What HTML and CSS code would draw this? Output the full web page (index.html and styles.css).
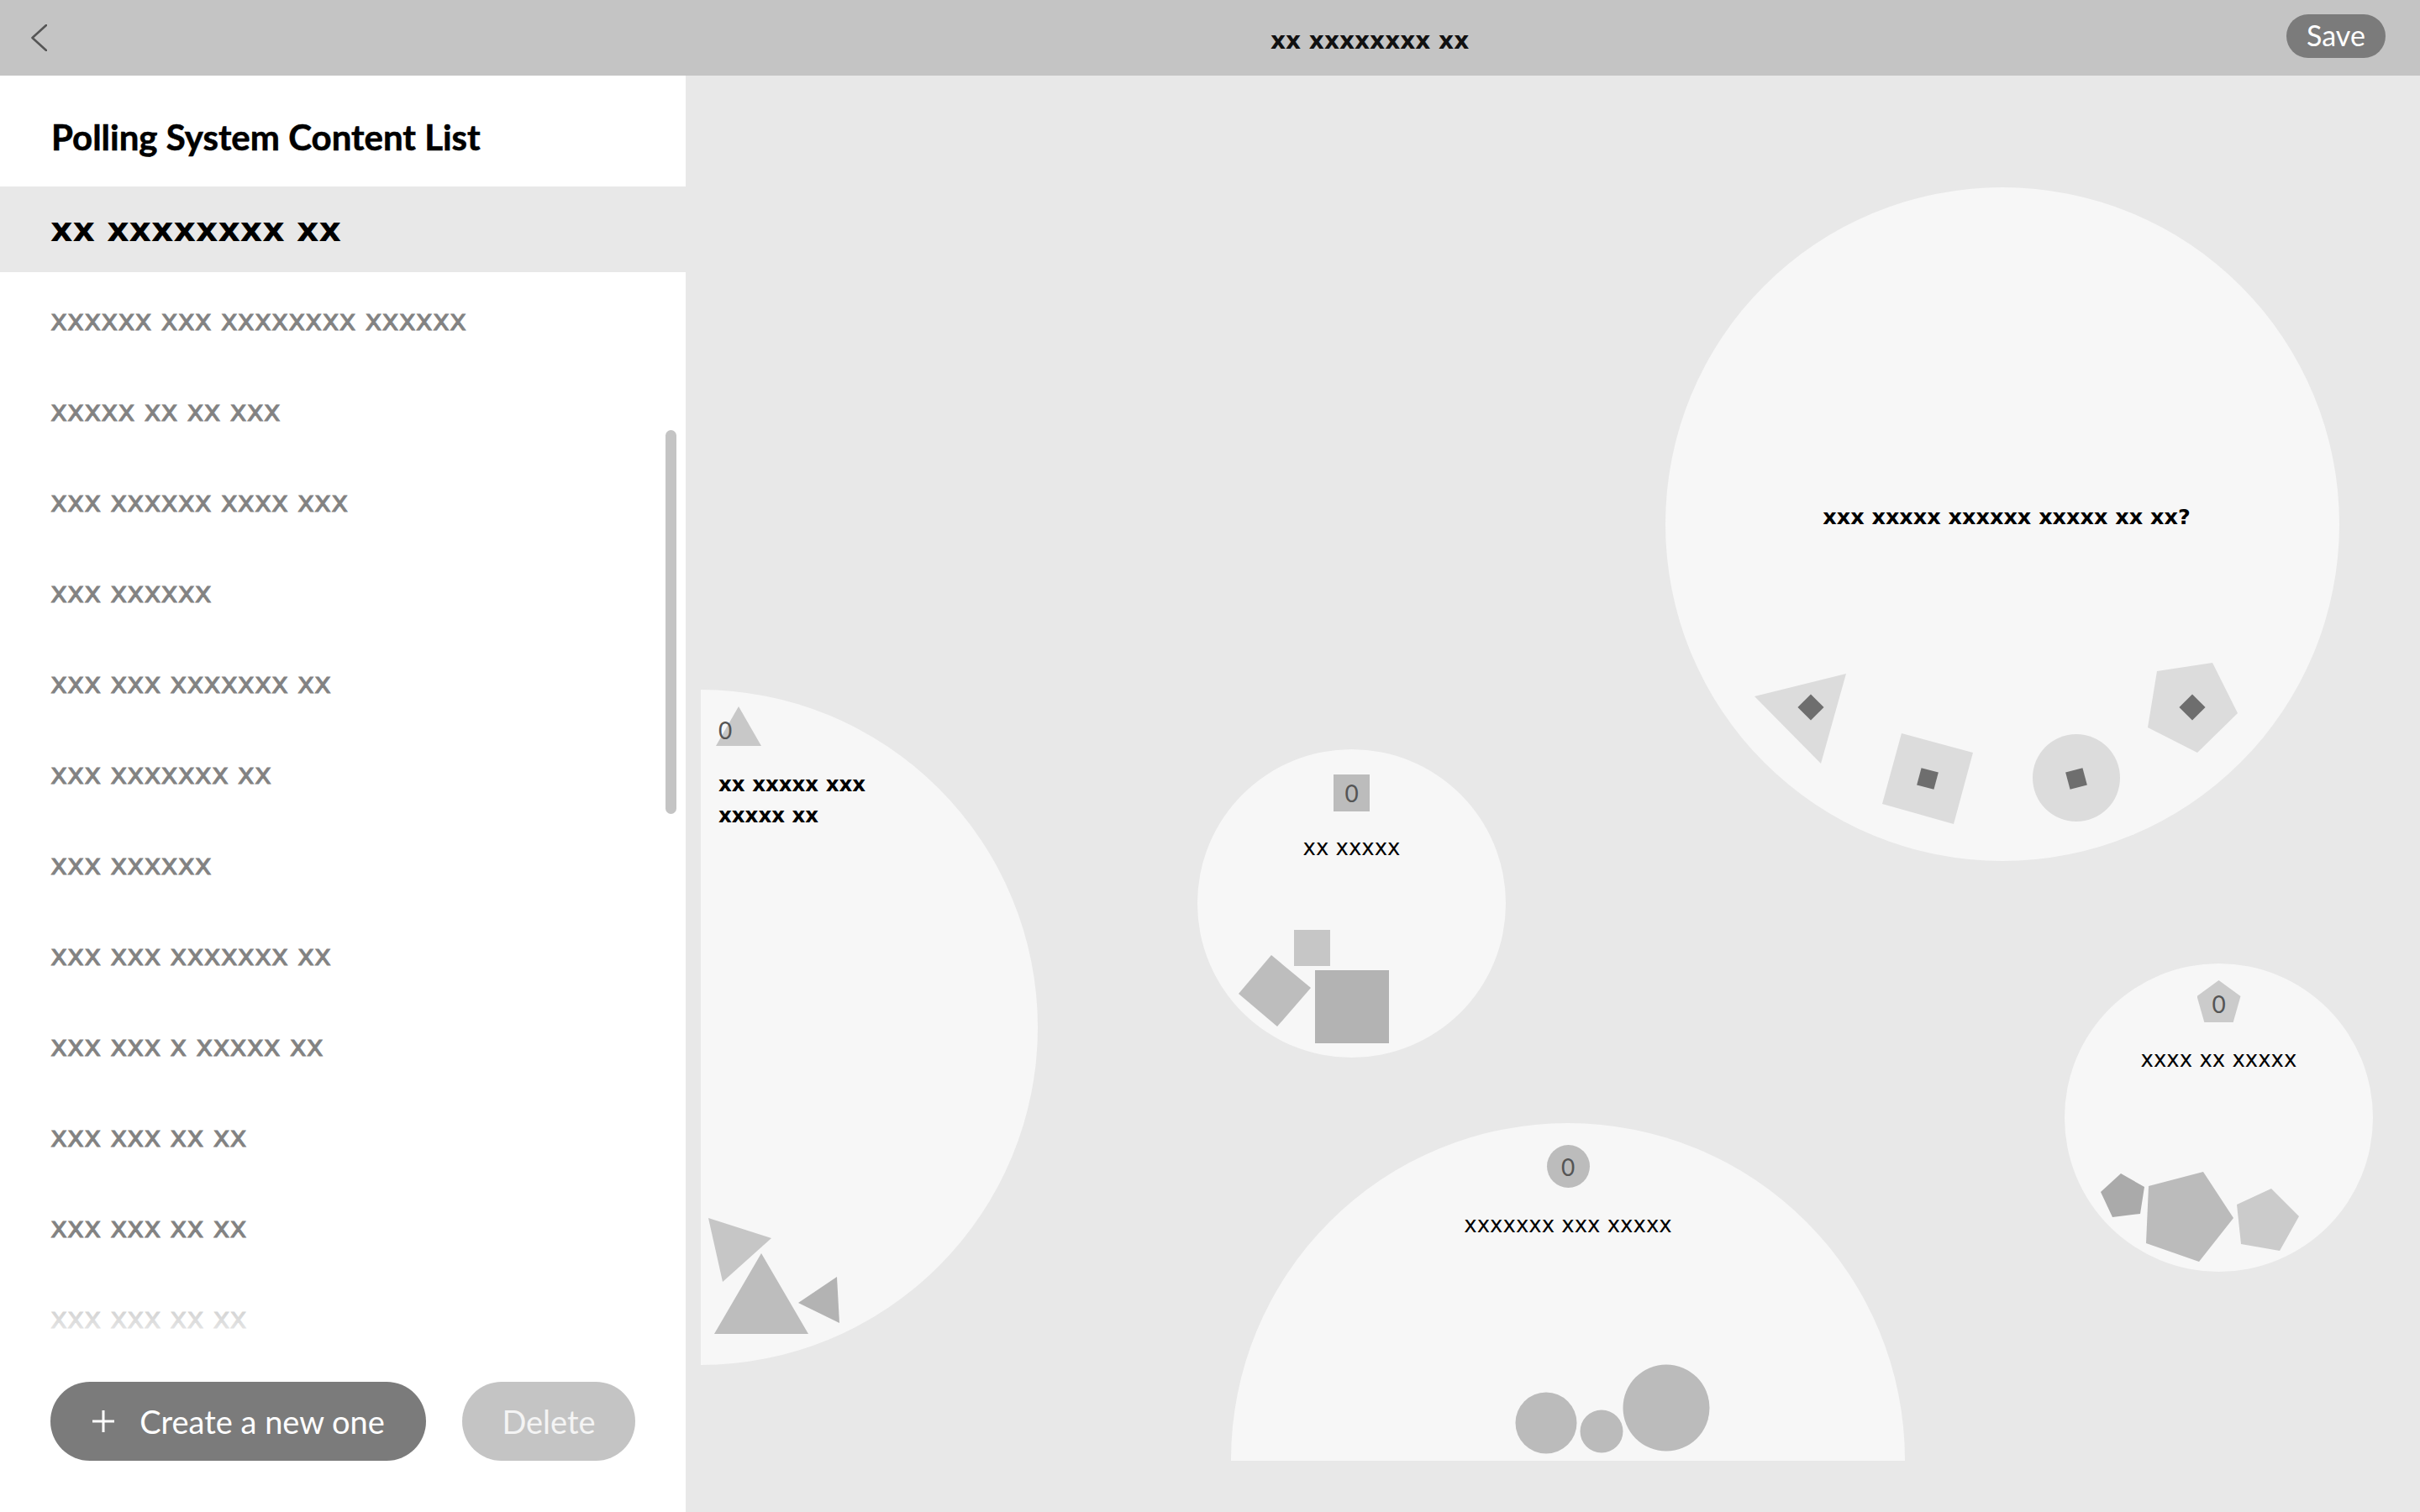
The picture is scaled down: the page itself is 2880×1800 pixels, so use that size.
FILE: index.html
```html
<!DOCTYPE html>
<html lang="en">
<head>
<meta charset="utf-8">
<title>Polling System Content List</title>
<link rel="stylesheet" href="styles.css">
</head>
<body>
<header class="topbar">
  <button class="back" aria-label="Back">
    <svg viewBox="0 0 19 32" width="19" height="32"><polyline points="18,1 1.5,16 18,31" fill="none" stroke="#555" stroke-width="2.6" stroke-linecap="round" stroke-linejoin="round"/></svg>
  </button>
  <h1 class="page-title">xx xxxxxxxx xx</h1>
  <button class="save">Save</button>
</header>
<div class="main">
  <aside class="sidebar">
    <h2 class="side-head">Polling System Content List</h2>
    <div class="list-wrap">
      <ul class="list">
        <li class="item selected">xx xxxxxxxx xx</li>
        <li class="item">xxxxxx xxx xxxxxxxx xxxxxx</li>
        <li class="item">xxxxx xx xx xxx</li>
        <li class="item">xxx xxxxxx xxxx xxx</li>
        <li class="item">xxx xxxxxx</li>
        <li class="item">xxx xxx xxxxxxx xx</li>
        <li class="item">xxx xxxxxxx xx</li>
        <li class="item">xxx xxxxxx</li>
        <li class="item">xxx xxx xxxxxxx xx</li>
        <li class="item">xxx xxx x xxxxx xx</li>
        <li class="item">xxx xxx xx xx</li>
        <li class="item">xxx xxx xx xx</li>
        <li class="item">xxx xxx xx xx</li>
      </ul>
      <div class="scrollbar"></div>
      <div class="fade"></div>
    </div>
    <div class="actions">
      <button class="btn btn-create">
        <svg viewBox="0 0 28 28" width="28" height="28"><path d="M14 1v26M1 14h26" stroke="#fff" stroke-width="3" fill="none"/></svg>
        <span>Create a new one</span>
      </button>
      <button class="btn btn-delete">Delete</button>
    </div>
  </aside>
  <main class="canvas">
    <div class="stage">
      <div class="bubble b1">
        <svg class="shapes" viewBox="0 0 802 802">
          <polygon points="106,606 215,579 185,686" fill="#dcdcdc"/>
          <rect x="-11" y="-11" width="22" height="22" fill="#6e6e6e" transform="translate(173 619) rotate(45)"/>
          <polygon points="281,650 366,673 343,758 258,734" fill="#dcdcdc"/>
          <rect x="-10.5" y="-10.5" width="21" height="21" fill="#6e6e6e" transform="translate(312 704) rotate(15)"/>
          <circle cx="489" cy="703" r="52" fill="#dcdcdc"/>
          <rect x="-10.5" y="-10.5" width="21" height="21" fill="#6e6e6e" transform="translate(489 704) rotate(-15)"/>
          <polygon points="585,576 651,566 681,626 633,673 574,643" fill="#dcdcdc"/>
          <rect x="-11" y="-11" width="22" height="22" fill="#6e6e6e" transform="translate(627 619) rotate(45)"/>
        </svg>
        <p class="label label-bold">xxx xxxxx xxxxxx xxxxx xx xx?</p>
      </div>

      <div class="bubble b2">
        <svg class="shapes" viewBox="0 0 804 804">
          <polygon points="412,629 487,653 429,705" fill="#c6c6c6"/>
          <polygon points="475,671 531,767 419,767" fill="#bdbdbd"/>
          <polygon points="565,699 568,754 519,730" fill="#b3b3b3"/>
        </svg>
        <div class="badge badge-tri">0</div>
        <p class="label label-wrap">xx xxxxx xxx xxxxx xx</p>
      </div>

      <div class="bubble b3">
        <svg class="shapes" viewBox="0 0 367 367">
          <rect x="115" y="215" width="43" height="43" fill="#c6c6c6"/>
          <rect x="140" y="263" width="88" height="87" fill="#b3b3b3"/>
          <polygon points="88,245 135,284 95,330 49,291" fill="#bdbdbd"/>
        </svg>
        <div class="badge badge-square">0</div>
        <p class="label">xx xxxxx</p>
      </div>

      <div class="bubble b4">
        <svg class="shapes" viewBox="0 0 802 802">
          <circle cx="375" cy="357" r="36.5" fill="#bbbbbb"/>
          <circle cx="441" cy="367" r="25.5" fill="#bbbbbb"/>
          <circle cx="518" cy="339" r="51.5" fill="#bbbbbb"/>
        </svg>
        <div class="badge badge-circle">0</div>
        <p class="label">xxxxxxx xxx xxxxx</p>
      </div>

      <div class="bubble b5">
        <svg class="shapes" viewBox="0 0 367 367">
          <polygon points="67,250 95,266 90,298 57,302 43,272" fill="#aaaaaa"/>
          <polygon points="165,248 201,303 160,355 97,333 100,265" fill="#bbbbbb"/>
          <polygon points="246,268 279,301 256,342 210,334 205,287" fill="#cbcbcb"/>
        </svg>
        <div class="badge badge-pent">0</div>
        <p class="label">xxxx xx xxxxx</p>
      </div>
    </div>
  </main>
</div>
</body>
</html>
```
FILE: styles.css
```css
* { box-sizing: border-box; }

html, body {
  margin: 0;
  width: 2880px;
  height: 1800px;
  overflow: hidden;
}

body {
  display: flex;
  flex-direction: column;
  background: #e8e8e8;
  font-family: Lato, "Noto Sans", sans-serif;
}

button { font-family: inherit; cursor: pointer; }

/* ---------- top bar ---------- */
.topbar {
  flex: none;
  height: 90px;
  background: #c4c4c4;
  display: flex;
  align-items: center;
  padding: 0 41px 0 37px;
}

.back {
  width: 19px;
  height: 32px;
  padding: 0;
  border: 0;
  background: none;
  display: flex;
}

.page-title {
  margin: 7px 0 0 1456px;
  font: 700 28px "DejaVu Sans", sans-serif;
  color: #111;
}

.save {
  margin: -4px 0 0 auto;
  width: 118px;
  height: 52px;
  padding: 0 0 3px;
  border: 0;
  border-radius: 26px;
  background: #7b7b7b;
  color: #fff;
  font-size: 34px;
  font-weight: 400;
}

/* ---------- layout ---------- */
.main {
  flex: 1;
  display: flex;
  min-height: 0;
}

.sidebar {
  flex: none;
  width: 816px;
  background: #fff;
  display: flex;
  flex-direction: column;
}

.side-head {
  margin: 0;
  height: 132px;
  padding: 15px 0 0 61px;
  line-height: 117px;
  font-size: 42px;
  font-weight: 700;
  color: #000;
  white-space: nowrap;
  -webkit-text-stroke: 0.6px #000;
}

.list-wrap {
  flex: 1;
  position: relative;
  overflow: hidden;
}

.list {
  list-style: none;
  margin: 0;
  padding: 0;
}

.item {
  height: 108px;
  padding: 6px 0 0 60px;
  font: 400 34px "DejaVu Sans", sans-serif;
  line-height: 102px;
  color: #828282;
  -webkit-text-stroke: 0.8px #828282;
  white-space: nowrap;
}

.item.selected {
  height: 102px;
  padding-top: 0;
  background: #e8e8e8;
  color: #000;
  -webkit-text-stroke: 0;
  font-weight: 700;
  font-size: 41px;
}

.scrollbar {
  position: absolute;
  left: 792px;
  top: 290px;
  width: 13px;
  height: 457px;
  border-radius: 7px;
  background: #c4c4c4;
}

.fade {
  position: absolute;
  left: 0;
  right: 0;
  bottom: 0;
  height: 120px;
  background: linear-gradient(rgba(255, 255, 255, 0.3), #fff);
  pointer-events: none;
}

.actions {
  flex: none;
  height: 180px;
  padding: 25px 0 0 60px;
  display: flex;
  align-items: flex-start;
  gap: 43px;
}

.btn {
  height: 94px;
  padding: 0;
  border: 0;
  border-radius: 47px;
  display: flex;
  align-items: center;
  justify-content: center;
  gap: 29px;
  color: #fff;
  font-size: 38px;
  font-weight: 400;
}

.btn-create {
  width: 447px;
  background: #7b7b7b;
}

.btn-delete {
  width: 206px;
  background: #c4c4c4;
  color: #f4f4f4;
}

/* ---------- canvas ---------- */
.canvas {
  flex: 1;
  display: flex;
  padding: 0 0 61px 18px;
  background: #e8e8e8;
}

.stage {
  flex: 1;
  position: relative;
  overflow: hidden;
}

.bubble {
  position: absolute;
  border-radius: 50%;
  background: #f7f7f7;
  display: flex;
  flex-direction: column;
  align-items: center;
}

.shapes {
  position: absolute;
  left: 0;
  top: 0;
  width: 100%;
  height: 100%;
}

.label {
  position: relative;
  margin: 0;
  font: 400 26px "DejaVu Sans", sans-serif;
  line-height: 30px;
  color: #000;
  text-align: center;
  white-space: nowrap;
}

.label-bold {
  font-weight: 700;
  font-size: 25.5px;
  left: 5px;
}

.label-wrap {
  left: 3px;
  width: 200px;
  white-space: normal;
  text-align: left;
  font-weight: 700;
  font-size: 24.5px;
  line-height: 37px;
  margin-top: 27px;
}

.b1 { left: 1148px; top: 133px; width: 802px; height: 802px; padding-top: 377px; }
.b2 { left: -403px; top: 731px; width: 804px; height: 804px; padding: 20px 0 0 421px; align-items: flex-start; }
.b3 { left: 591px; top: 802px; width: 367px; height: 367px; padding-top: 30px; }
.b4 { left: 631px; top: 1247px; width: 802px; height: 802px; padding-top: 26px; }
.b5 { left: 1623px; top: 1057px; width: 367px; height: 367px; padding-top: 20px; }

.b3 .label { margin-top: 28px; }
.b4 .label { margin-top: 29px; }
.b5 .label { margin-top: 29px; }

.badge {
  position: relative;
  z-index: 0;
  display: flex;
  align-items: center;
  justify-content: center;
  font-size: 28px;
  line-height: 1;
  color: #555;
}

.badge::before {
  content: "";
  position: absolute;
  left: 0;
  top: 0;
  width: 100%;
  height: 100%;
  z-index: -1;
  background: #bcbcbc;
}

.badge-square { width: 43px; height: 44px; }

.badge-circle { width: 51px; height: 51px; }
.badge-circle::before { border-radius: 50%; }

.badge-pent { width: 52px; height: 50px; padding-top: 6px; }
.badge-pent::before {
  background: #cbcbcb;
  clip-path: polygon(50% 0, 100% 38%, 83% 100%, 17% 100%, 0 38%);
}

.badge-tri {
  width: 54px;
  height: 47px;
  justify-content: flex-start;
  align-items: flex-end;
  padding: 0 0 5px 3px;
}
.badge-tri::before {
  background: #c8c8c8;
  clip-path: polygon(50% 0, 100% 100%, 0 100%);
}
```
